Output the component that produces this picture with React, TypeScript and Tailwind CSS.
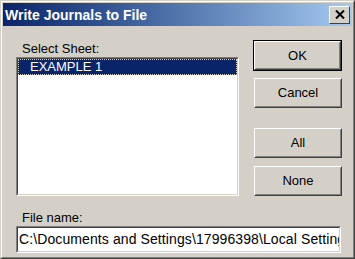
import React from "react";

const font = { fontFamily: "'Liberation Sans', Arial, sans-serif" };

function Btn({ label, def = false }: { label: string; def?: boolean }) {
  const inner = (
    <div className="h-full w-full border border-t-white border-l-white border-r-[#404040] border-b-[#404040]">
      <div className="flex h-full w-full items-center justify-center border border-t-[#d4d0c8] border-l-[#d4d0c8] border-r-[#808080] border-b-[#808080] text-[13px] text-black">
        {label}
      </div>
    </div>
  );
  return def ? (
    <div className="h-[31px] w-[89px] border border-black">{inner}</div>
  ) : (
    <div className="ml-px h-[30px] w-[88px]">{inner}</div>
  );
}

function Sunken({ children, className }: { children: React.ReactNode; className: string }) {
  return (
    <div className={`border border-t-[#808080] border-l-[#808080] border-r-white border-b-white ${className}`}>
      <div className="h-full w-full border border-t-[#404040] border-l-[#404040] border-r-[#d4d0c8] border-b-[#d4d0c8] bg-white">
        {children}
      </div>
    </div>
  );
}

export default function App() {
  return (
    <div style={font} className="h-[259px] w-[355px] border border-t-[#d4d0c8] border-l-[#d4d0c8] border-r-[#404040] border-b-[#404040] bg-[#d4d0c8]">
      <div className="h-full w-full border border-t-white border-l-white border-r-[#808080] border-b-[#808080] p-px">
        <div className="flex h-[23px] items-center justify-between bg-gradient-to-r from-[#0a246a] to-[#a6caf0] pl-[2px] pr-[2px]">
          <span className="text-[14px] font-bold leading-none text-white">Write Journals to File</span>
          <div className="flex h-[18px] w-[21px] items-center justify-center border border-t-white border-l-white border-r-[#404040] border-b-[#404040] bg-[#d4d0c8]">
            <svg width="10" height="9" viewBox="0 0 10 9">
              <path d="M1 0.5 L9 8.5 M9 0.5 L1 8.5" stroke="black" strokeWidth="2" />
            </svg>
          </div>
        </div>
        <div className="flex pl-[13px] pt-[14px]">
          <div className="flex w-[223px] flex-col">
            <div className="h-[17px] pl-[6px] pt-[1px] text-[13px] leading-[15px] text-black">Select Sheet:</div>
            <Sunken className="h-[139px] w-[223px]">
              <div className="flex h-[16px] items-center border border-dotted border-[#d4d0c8] bg-[#0a246a] pl-[11px] text-[13px] text-white">
                EXAMPLE 1
              </div>
            </Sunken>
          </div>
          <div className="ml-[14px] flex flex-col">
            <Btn label="OK" def />
            <div className="mt-[7px]"><Btn label="Cancel" /></div>
            <div className="mt-[20px]"><Btn label="All" /></div>
            <div className="mt-[8px]"><Btn label="None" /></div>
          </div>
        </div>
        <div className="pl-[13px] pt-[13px]">
          <div className="h-[17px] pl-[6px] pt-[1px] text-[13px] leading-[15px] text-black">File name:</div>
          <Sunken className="h-[27px] w-[325px]">
            <div className="flex h-full items-center overflow-hidden whitespace-nowrap pl-[1px] text-[14px] tracking-[0.1px] text-black">
              C:\Documents and Settings\17996398\Local Settings
            </div>
          </Sunken>
        </div>
      </div>
    </div>
  );
}
